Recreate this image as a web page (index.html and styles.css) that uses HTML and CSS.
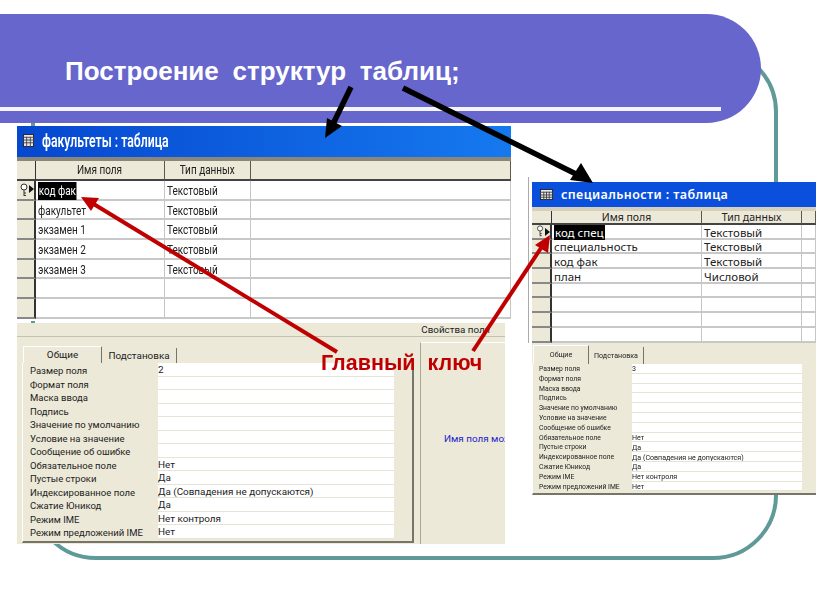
FILE: index.html
```html
<!DOCTYPE html>
<html lang="ru">
<head>
    <meta charset="UTF-8" />
    <title>Построение структур таблиц</title>
    <link rel="stylesheet" href="styles.css">
</head>
<body>

<div class="slide">
    <div class="frame"></div>

    <header class="banner">
        <h1>Построение структур таблиц;</h1>
        <div class="banner-line"></div>
    </header>

    <!-- левое окно -->
    <section class="win win-left">
        <div class="titlebar">
            <svg class="grid-icon" viewBox="0 0 12 14"><rect x="0.5" y="0.5" width="11" height="13" fill="#e8e8e8" stroke="#222"/><path d="M0 3.5h12M0 6.5h12M0 9.5h12M4 3v11M8 3v11" stroke="#444" fill="none"/></svg>
            <span class="sq">факультеты : таблица</span>
        </div>
        <div class="table">
            <div class="sel head"></div><div class="th"><span class="sq">Имя поля</span></div><div class="th"><span class="sq">Тип данных</span></div><div class="th"></div>
            <div class="sel"><svg class="key" viewBox="0 0 9 14"><circle cx="4" cy="4" r="3" fill="#fff" stroke="#333"/><path d="M4 7v6M4 10h2M4 12.500h2" stroke="#333" fill="none"/></svg><i class="pointer"></i></div><div class="td"><span class="sq picked">код фак</span></div><div class="td"><span class="sq">Текстовый</span></div><div class="td"></div>
            <div class="sel"></div><div class="td"><span class="sq">факультет</span></div><div class="td"><span class="sq">Текстовый</span></div><div class="td"></div>
            <div class="sel"></div><div class="td"><span class="sq">экзамен 1</span></div><div class="td"><span class="sq">Текстовый</span></div><div class="td"></div>
            <div class="sel"></div><div class="td"><span class="sq">экзамен 2</span></div><div class="td"><span class="sq">Текстовый</span></div><div class="td"></div>
            <div class="sel"></div><div class="td"><span class="sq">экзамен 3</span></div><div class="td"><span class="sq">Текстовый</span></div><div class="td"></div>
            <div class="sel"></div><div class="td"></div><div class="td"></div><div class="td"></div>
            <div class="sel"></div><div class="td"></div><div class="td"></div><div class="td"></div>
        </div>
        <div class="lower">
            <div class="lower-head">Свойства поля</div>
            <div class="lower-body">
                <div class="props">
                    <div class="tabs"><span class="tab active">Общие</span><span class="tab">Подстановка</span></div>
                    <div class="panel">
                        <div class="row"><span>Размер поля</span><span class="val">2</span></div>
                        <div class="row"><span>Формат поля</span><span class="val"></span></div>
                        <div class="row"><span>Маска ввода</span><span class="val"></span></div>
                        <div class="row"><span>Подпись</span><span class="val"></span></div>
                        <div class="row"><span>Значение по умолчанию</span><span class="val"></span></div>
                        <div class="row"><span>Условие на значение</span><span class="val"></span></div>
                        <div class="row"><span>Сообщение об ошибке</span><span class="val"></span></div>
                        <div class="row"><span>Обязательное поле</span><span class="val">Нет</span></div>
                        <div class="row"><span>Пустые строки</span><span class="val">Да</span></div>
                        <div class="row"><span>Индексированное поле</span><span class="val">Да (Совпадения не допускаются)</span></div>
                        <div class="row"><span>Сжатие Юникод</span><span class="val">Да</span></div>
                        <div class="row"><span>Режим IME</span><span class="val">Нет контроля</span></div>
                        <div class="row"><span>Режим предложений IME</span><span class="val">Нет</span></div>
                    </div>
                </div>
                <div class="hint"><p>Имя поля мож</p></div>
            </div>
        </div>
    </section>

    <!-- правое окно -->
    <section class="win win-right">
        <div class="titlebar">
            <svg class="grid-icon" viewBox="0 0 14 12"><rect x="0.5" y="0.5" width="13" height="11" fill="#e8e8e8" stroke="#222"/><path d="M0 3.500h14M0 6.500h14M0 9h14M4 3v9M7 3v9M10 3v9" stroke="#444" fill="none"/></svg>
            <span>специальности : таблица</span>
        </div>
        <div class="table">
            <div class="sel head"></div><div class="th"><span class="sq">Имя поля</span></div><div class="th"><span class="sq">Тип данных</span></div><div class="th"></div>
            <div class="sel"><svg class="key" viewBox="0 0 9 14"><circle cx="4" cy="4" r="3" fill="#fff" stroke="#333"/><path d="M4 7v6M4 10h2M4 12.500h2" stroke="#333" fill="none"/></svg><i class="pointer"></i></div><div class="td"><span class="sq picked">код спец</span></div><div class="td"><span class="sq">Текстовый</span></div><div class="td"></div>
            <div class="sel"></div><div class="td"><span class="sq">специальность</span></div><div class="td"><span class="sq">Текстовый</span></div><div class="td"></div>
            <div class="sel"></div><div class="td"><span class="sq">код фак</span></div><div class="td"><span class="sq">Текстовый</span></div><div class="td"></div>
            <div class="sel"></div><div class="td"><span class="sq">план</span></div><div class="td"><span class="sq">Числовой</span></div><div class="td"></div>
            <div class="sel"></div><div class="td"></div><div class="td"></div><div class="td"></div>
            <div class="sel"></div><div class="td"></div><div class="td"></div><div class="td"></div>
            <div class="sel"></div><div class="td"></div><div class="td"></div><div class="td"></div>
            <div class="sel"></div><div class="td"></div><div class="td"></div><div class="td"></div>
        </div>
        <div class="lower">
            <div class="lower-body">
                <div class="props">
                    <div class="tabs"><span class="tab active">Общие</span><span class="tab">Подстановка</span></div>
                    <div class="panel">
                        <div class="row"><span>Размер поля</span><span class="val">3</span></div>
                        <div class="row"><span>Формат поля</span><span class="val"></span></div>
                        <div class="row"><span>Маска ввода</span><span class="val"></span></div>
                        <div class="row"><span>Подпись</span><span class="val"></span></div>
                        <div class="row"><span>Значение по умолчанию</span><span class="val"></span></div>
                        <div class="row"><span>Условие на значение</span><span class="val"></span></div>
                        <div class="row"><span>Сообщение об ошибке</span><span class="val"></span></div>
                        <div class="row"><span>Обязательное поле</span><span class="val">Нет</span></div>
                        <div class="row"><span>Пустые строки</span><span class="val">Да</span></div>
                        <div class="row"><span>Индексированное поле</span><span class="val">Да (Совпадения не допускаются)</span></div>
                        <div class="row"><span>Сжатие Юникод</span><span class="val">Да</span></div>
                        <div class="row"><span>Режим IME</span><span class="val">Нет контроля</span></div>
                        <div class="row"><span>Режим предложений IME</span><span class="val">Нет</span></div>
                    </div>
                </div>
            </div>
        </div>
    </section>

    <svg class="arrows" viewBox="0 0 816 613">
        <g stroke="#000" stroke-width="5.500" fill="#000">
            <path d="M351 87 L333 124"/>
            <path d="M325 138 L327 118 L342 126 Z" stroke="none"/>
            <path d="M403 88 L578 175"/>
            <path d="M593 183 L570 180 L581 163 Z" stroke="none"/>
        </g>
        <g stroke="#c00000" stroke-width="4" fill="#c00000">
            <path d="M337 352 L92 203"/>
            <path d="M81 197 L99 198 L91 211 Z" stroke="none"/>
            <path d="M473 351 L543 245"/>
            <path d="M550 235 L548 253 L535 245 Z" stroke="none"/>
        </g>
    </svg>

    <div class="main-key">Главный ключ</div>
</div>

</body>
</html>
```

FILE: styles.css
```css
body { margin: 0; background: #fff; overflow: hidden; }

.slide {
    position: relative; width: 816px; height: 613px; overflow: hidden;
    background: #fff; font-family: Roboto, sans-serif; color: #222;
}

.frame {
    position: absolute; left: 31px; top: 47px; width: 739px; height: 505px;
    border: 4px solid #5f9a98; border-radius: 65px;
}

.banner {
    position: absolute; left: 0; top: 14px; width: 761px; height: 109px;
    background: #6666cc; border-radius: 0 58px 58px 0;
}
.banner h1 {
    margin: 0; position: absolute; left: 65px; top: 42px;
    font: bold 26px 'Liberation Sans', sans-serif; color: #fff;
    word-spacing: 6.500px; white-space: nowrap;
}
.banner-line {
    position: absolute; left: 0; top: 93px; width: 721px; height: 4px; background: #f4f4fa;
}

/* окна */
.win { position: absolute; filter: blur(0.35px); }
.win-left {
    left: 17px; top: 126px; width: 494px;
    --title-h: 31px; --strip: 4px; --head-h: 20px; --row-h: 19.7px;
    --cols: 19px 129px 86px 1fr; --font: 13.500px; --sx: 0.74;
}
.win-right {
    left: 532px; top: 182px; width: 284px;
    --title-h: 25px; --strip: 4px; --head-h: 14px; --row-h: 14.7px;
    --cols: 20px 150px 100px 1fr; --font: 11.500px; --sx: 1;
}
.win-right::before {
    content: ""; position: absolute; left: -4px; top: -5px; width: 1px; height: 166px; background: #aaa;
}

.sq { display: inline-block; transform: scaleX(var(--sx)); white-space: nowrap; }
.td .sq { transform-origin: left; }

.titlebar {
    height: var(--title-h); display: flex; align-items: center; gap: 8px;
    background: linear-gradient(90deg, #0647d0, #1579ee);
    color: #fff; font-weight: 600; box-sizing: border-box;
}
.win-left .titlebar { font-size: 17.500px; padding: 0 0 2px 6px; --sx: 0.7; }
.win-left .titlebar .sq { transform-origin: left; }
.win-right .titlebar { font-family: 'Noto Sans', sans-serif; font-size: 12.500px; padding-left: 8px; background: #0a50dc; letter-spacing: 0.4px; }
.grid-icon { flex: none; }
.win-left .grid-icon { width: 11px; height: 15px; }
.win-right .grid-icon { width: 13px; height: 11px; }

.table {
    display: grid; grid-template-columns: var(--cols);
    grid-template-rows: var(--head-h); grid-auto-rows: var(--row-h);
    border-top: var(--strip) solid #8a877a; background: #fff;
    font-size: var(--font); line-height: 1;
}
.win-left .table { height: 160px; overflow: hidden; }
.win-right .table {
    height: 132px; overflow: hidden; font-family: 'Noto Sans', sans-serif; border-top-color: #d4d0bc;
}
.win-right .th { font-size: 10.500px; }

.th {
    background: #ece9d8; text-align: center; box-sizing: border-box;
    display: flex; align-items: center; justify-content: center;
    border-right: 1px solid #5c5a4e; border-bottom: 2px solid #444;
}
.td {
    box-sizing: border-box; padding: 2px 2px 0; display: flex; align-items: center;
    border-right: 1px solid #c6c6c6; border-bottom: 2px solid #c8c8c8; white-space: nowrap;
}
.sel {
    position: relative; background: #ece9d8; box-sizing: border-box;
    border-right: 2px solid #333; border-bottom: 2px solid #888;
}
.sel.head { border-bottom-color: #444; border-right-width: 1px; }
.picked { background: #000; color: #fff; padding: 2px 1px; }
.key { position: absolute; left: 3px; top: 2px; width: 9px; height: 14px; }
.pointer {
    position: absolute; right: 0; top: 4px; width: 0; height: 0;
    border-left: 5px solid #111; border-top: 4px solid transparent; border-bottom: 4px solid transparent;
}
.win-right .key { left: 4px; top: 0; height: 12px; }
.win-right .pointer { top: 3px; }

/* нижняя часть */
.lower { background: #ece9d8; }
.win-left .lower { width: 488px; height: 221px; margin-top: 2px; }
.win-right .lower { height: 152px; }

.lower-head {
    height: 13px; font-size: 9.800px; line-height: 13px; text-align: right;
    padding-right: 15px; border-bottom: 1px solid #c4c1b0; overflow: hidden;
}
.lower-body { display: flex; }
.win-left .lower-body { height: 207px; }

.props { flex: none; }
.win-left .props {
    width: 392px; margin-left: 5px; padding-top: 9px;
    --fs: 9.500px; --fv: 9.900px; --r: 13.500px; --lab: 128px; --val: 236px; --pad: 7px; --tab-h: 17px; --tab1: 79px; --tab2: 75px; --nudge: 2px;
}
.win-right .props {
    width: 284px; margin-left: 0; padding-top: 2px;
    --fs: 6.800px; --fv: 7.100px; --r: 9.800px; --lab: 93px; --val: 170px; --pad: 6px; --tab-h: 19px; --tab1: 56px; --tab2: 55px; --nudge: 1px;
}

.tabs { display: flex; height: var(--tab-h); padding-left: 1px; font-size: var(--fv); }
.tab {
    display: flex; align-items: center; justify-content: center; box-sizing: border-box;
    width: var(--tab2); border-right: 1px solid #77756a; margin-top: 2px;
}
.tab.active { width: var(--tab1); border-top: 1px solid #fff; border-left: 1px solid #fff; margin-top: 0; padding-bottom: 2px; }

.panel {
    box-sizing: border-box; padding: 0 0 2px var(--pad); font-size: var(--fs); line-height: 1;
    border-right: 2px solid #77756a; border-bottom: 2px solid #77756a; border-left: 1px solid #fff;
}
.win-right .panel { border-right: none; }

.row {
    display: grid; grid-template-columns: var(--lab) var(--val); height: var(--r); align-items: stretch;
    white-space: nowrap;
}
.row span { display: flex; align-items: center; overflow: hidden; padding-top: var(--nudge); box-sizing: border-box; }
.row .val { background: #fff; border-bottom: 1px solid #e6e4d6; font-size: var(--fv); }

.hint {
    flex: 1; margin-left: 6px; margin-top: 5px; border-left: 1px solid #a9a696; border-top: 1px solid #fff;
    overflow: hidden; white-space: nowrap; font-size: 9.900px; color: #2222cc;
}
.hint p { margin: 90px 0 0 23px; }

.arrows { position: absolute; left: 0; top: 0; width: 816px; height: 613px; }

.main-key {
    position: absolute; left: 321px; top: 351px; white-space: nowrap;
    font: bold 21.500px 'Liberation Sans', sans-serif; color: #c00000; word-spacing: 6px;
}
```
